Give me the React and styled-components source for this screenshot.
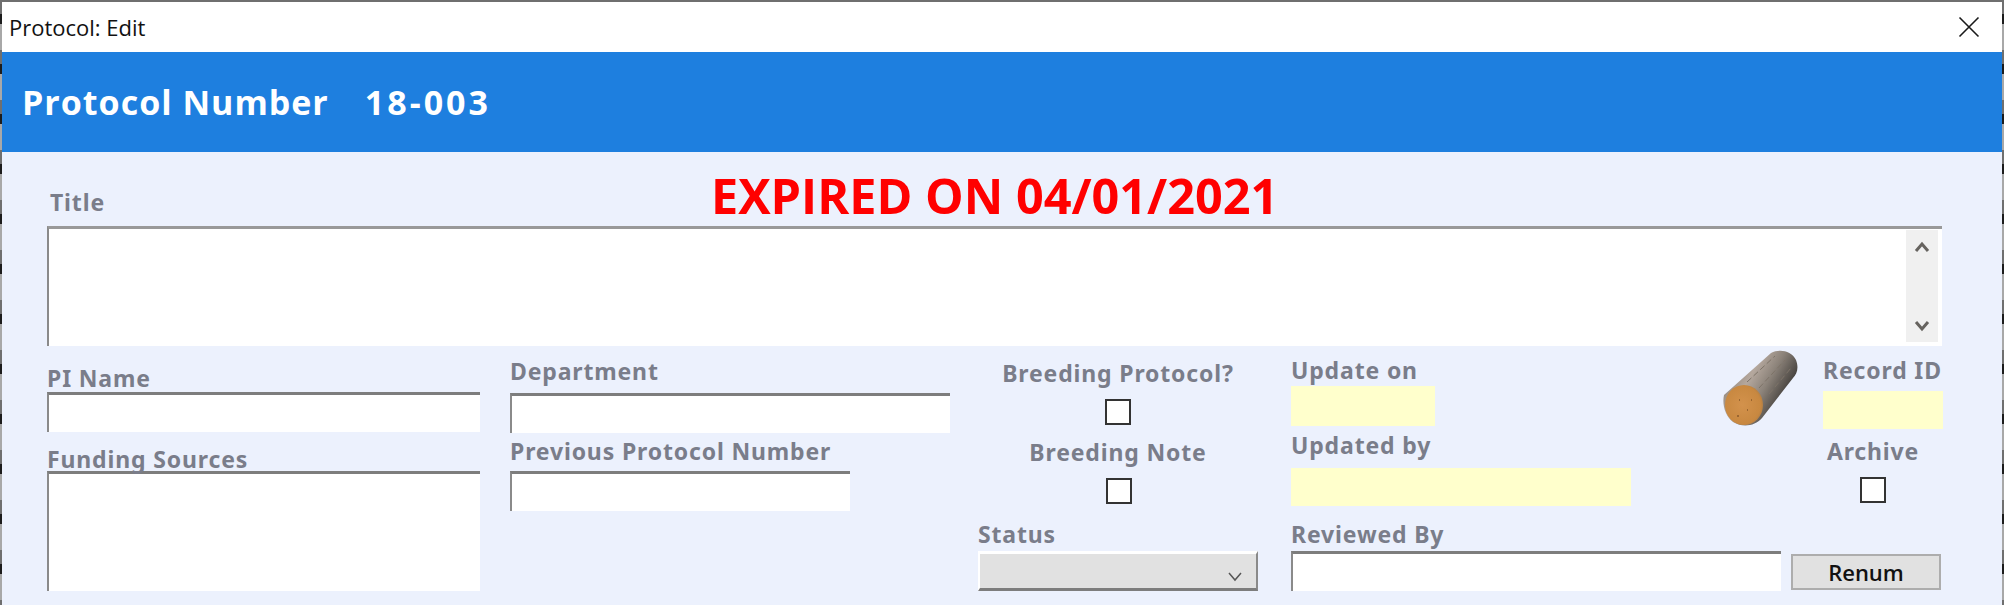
import React from 'react'
import styled, {createGlobalStyle} from 'styled-components'

const Global = createGlobalStyle`
html,body{margin:0;padding:0;background:#fff;}
body{width:2004px;height:605px;overflow:hidden;}
*{box-sizing:border-box;}
`

const Label = ({children, ...rest}) => <LabelText {...rest}>{children}</LabelText>

const LogIcon = () => (
    <svg width="78" height="78" viewBox="0 0 78 78">
        <defs>
            <linearGradient id="bark" x1="0.15" y1="0.15" x2="0.85" y2="0.55">
                <stop offset="0" stopColor="#8f8275" />
                <stop offset="0.35" stopColor="#b5a89e" />
                <stop offset="0.65" stopColor="#8b8279" />
                <stop offset="1" stopColor="#47433f" />
            </linearGradient>
            <radialGradient id="wood" cx="0.45" cy="0.5" r="0.6">
                <stop offset="0" stopColor="#d3924c" />
                <stop offset="0.8" stopColor="#c88840" />
                <stop offset="1" stopColor="#a87a46" />
            </radialGradient>
        </defs>
        <path d="M1 45 L48 3 C56 -1 68 0 73 10 C76 18 74 24 70 28 L39 68 C32 76 20 78 10 72 C2 66 -1 54 1 45 Z" fill="url(#bark)" />
        <path d="M24 32 L52 6 M36 38 L62 10 M46 44 L68 18" stroke="#7d7368" strokeWidth="1" strokeDasharray="6 3" fill="none" />
        <ellipse cx="21" cy="55" rx="19" ry="20" fill="url(#wood)" />
        <path d="M16 50 h1 M24 60 h1 M14 66 h2 M28 50 h1" stroke="#8a5a2a" strokeWidth="1.5" fill="none" />
    </svg>
)

const App = () => {
    return (
        <Frame>
            <Global />
            <TitleBar>
                <WindowTitle>Protocol: Edit</WindowTitle>
                <svg width="22" height="22" viewBox="0 0 22 22">
                    <path d="M1.5 1.5 L20.5 20.5 M20.5 1.5 L1.5 20.5" stroke="#1a1a1a" strokeWidth="1.6" fill="none" />
                </svg>
            </TitleBar>
            <Header>
                <HeaderText $spacing={1}>Protocol Number</HeaderText>
                <HeaderText $spacing={3}>18-003</HeaderText>
            </Header>
            <Body>
                <TitleRow>
                    <Label>Title</Label>
                    <Expired>EXPIRED ON 04/01/2021</Expired>
                </TitleRow>
                <TitleBox>
                    <TitleArea readOnly />
                    <Scroller>
                        <svg width="16" height="14" viewBox="0 0 16 14">
                            <path d="M2 11 L8 4 L14 11" stroke="#66635f" strokeWidth="3" fill="none" />
                        </svg>
                        <svg width="16" height="14" viewBox="0 0 16 14">
                            <path d="M2 3 L8 10 L14 3" stroke="#66635f" strokeWidth="3" fill="none" />
                        </svg>
                    </Scroller>
                </TitleBox>
                <Form>
                    <Column $width={433} $top={20}>
                        <Label>PI Name</Label>
                        <Input $width={433} $top={2} />
                        <Label $gap={15}>Funding Sources</Label>
                        <Input as="textarea" readOnly $width={433} $height={120} />
                    </Column>
                    <Column $width={438} $top={13}>
                        <Label>Department</Label>
                        <Input $width={440} $top={10} />
                        <Label $gap={6}>Previous Protocol Number</Label>
                        <Input $width={340} $top={8} />
                    </Column>
                    <Column $width={280} $top={15}>
                        <Centered>
                            <Label>Breeding Protocol?</Label>
                            <Check $top={14} />
                            <Label $gap={15}>Breeding Note</Label>
                            <Check $top={14} $shift={2} />
                        </Centered>
                        <Label $gap={18}>Status</Label>
                        <Select>
                            <svg width="16" height="10" viewBox="0 0 16 10">
                                <path d="M2 1 L8 8 L14 1" stroke="#555" strokeWidth="1.5" fill="none" />
                            </svg>
                        </Select>
                    </Column>
                    <RightSide>
                        <Row $height={74}>
                            <Column $width={144} $top={12}>
                                <Label>Update on</Label>
                                <Stamp $width={144} $height={40} $top={4} />
                            </Column>
                            <LogSlot>
                                <LogIcon />
                            </LogSlot>
                            <Column $width={120} $top={12}>
                                <Label>Record ID</Label>
                                <Stamp $width={120} $height={38} $top={9} />
                            </Column>
                        </Row>
                        <Row $height={74}>
                            <Column $width={340} $top={13}>
                                <Label>Updated by</Label>
                                <Stamp $width={340} $height={38} $top={11} />
                            </Column>
                            <ArchiveBox>
                                <Label>Archive</Label>
                                <Check $top={14} />
                            </ArchiveBox>
                        </Row>
                        <Row $height={96}>
                            <Column $width={490} $top={28}>
                                <Label>Reviewed By</Label>
                                <Input $width={490} $top={5} />
                            </Column>
                            <Renum>Renum</Renum>
                        </Row>
                    </RightSide>
                </Form>
            </Body>
        </Frame>
    )
}

export default App


const Frame=styled.div`
width:2004px;
height:605px;
padding:2px 2px 0 2px;
display:flex;
flex-direction:column;
overflow:hidden;
background:repeating-linear-gradient(180deg,#6f6f6f 0,#6f6f6f 14px,#1c1c1c 14px,#1c1c1c 24px,#a8a8a8 24px,#a8a8a8 50px);
`
const TitleBar=styled.div`
height:50px;
flex:none;
background:#fff;
display:flex;
align-items:center;
justify-content:space-between;
padding:0 22px 0 7px;
`
const WindowTitle=styled.span`
font-family:"Open Sans",sans-serif;
font-size:22px;
color:#111;
`
const Header=styled.div`
height:100px;
flex:none;
background:#1e7fdf;
display:flex;
align-items:center;
gap:36px;
padding:0 0 0 20px;
`
const HeaderText=styled.span`
font-family:"Open Sans",sans-serif;
font-weight:700;
font-size:34px;
letter-spacing:${p=>p.$spacing}px;
color:#fff;
`
const Body=styled.div`
flex:1;
background:#ecf1fd;
padding:0 60px 0 45px;
`
const TitleRow=styled.div`
height:74px;
display:flex;
align-items:flex-end;
padding:0 0 12px 3px;
position:relative;
`
const LabelText=styled.div`
font-family:"Noto Sans",sans-serif;
font-weight:700;
font-size:23px;
line-height:24px;
letter-spacing:0.85px;
color:#7a7d8a;
white-space:nowrap;
margin-top:${p=>p.$gap||0}px;
`
const Expired=styled.div`
font-family:"Open Sans",sans-serif;
font-weight:700;
font-size:48.6px;
line-height:50px;
color:#f00;
margin:0 0 -6px 606px;
`
const TitleBox=styled.div`
width:1895px;
height:120px;
background:#fff;
border-top:3px solid #999;
border-left:2px solid #8a8a8a;
display:flex;
padding:1px 4px 4px 0;
`
const TitleArea=styled.textarea`
flex:1;
border:none;
outline:none;
resize:none;
background:#fff;
`
const Scroller=styled.div`
width:32px;
background:#f0f0f0;
display:flex;
flex-direction:column;
align-items:center;
justify-content:space-between;
padding:10px 0 9px;
`
const Form=styled.div`
display:flex;
gap:30px;
`
const Column=styled.div`
width:${p=>p.$width}px;
flex:none;
padding-top:${p=>p.$top||0}px;
`
const Input=styled.input`
display:block;
width:${p=>p.$width}px;
height:${p=>p.$height||40}px;
margin-top:${p=>p.$top||0}px;
border:none;
border-top:3px solid #7d7d7d;
border-left:2px solid #8a8a8a;
background:#fff;
outline:none;
resize:none;
padding:0;
`
const Centered=styled.div`
display:flex;
flex-direction:column;
align-items:center;
`
const Check=styled.div`
width:26px;
height:26px;
flex:none;
margin-top:${p=>p.$top||0}px;
margin-left:${p=>p.$shift||0}px;
background:#fff;
border:2px solid #333;
`
const Select=styled.div`
width:280px;
height:40px;
margin-top:5px;
background:#e1e1e1;
border-top:3px solid #fff;
border-left:2px solid #fff;
border-bottom:3px solid #7d7d7d;
border-right:2px solid #8a8a8a;
display:flex;
align-items:flex-end;
justify-content:flex-end;
padding:0 13px 6px 0;
`
const RightSide=styled.div`
width:652px;
flex:none;
margin-left:3px;
`
const Row=styled.div`
display:flex;
justify-content:space-between;
height:${p=>p.$height}px;
`
const Stamp=styled.div`
width:${p=>p.$width}px;
height:${p=>p.$height}px;
margin-top:${p=>p.$top||0}px;
background:#ffffcc;
`
const LogSlot=styled.div`
margin:4px 22px 0 auto;
`
const ArchiveBox=styled.div`
width:116px;
flex:none;
display:flex;
flex-direction:column;
align-items:center;
padding-top:19px;
margin-right:12px;
`
const Renum=styled.button`
align-self:flex-end;
width:150px;
height:36px;
margin-right:2px;
background:#e1e1e1;
border:2px solid #adadad;
font-family:"Open Sans",sans-serif;
font-weight:600;
font-size:22px;
color:#111;
padding:0;
`
